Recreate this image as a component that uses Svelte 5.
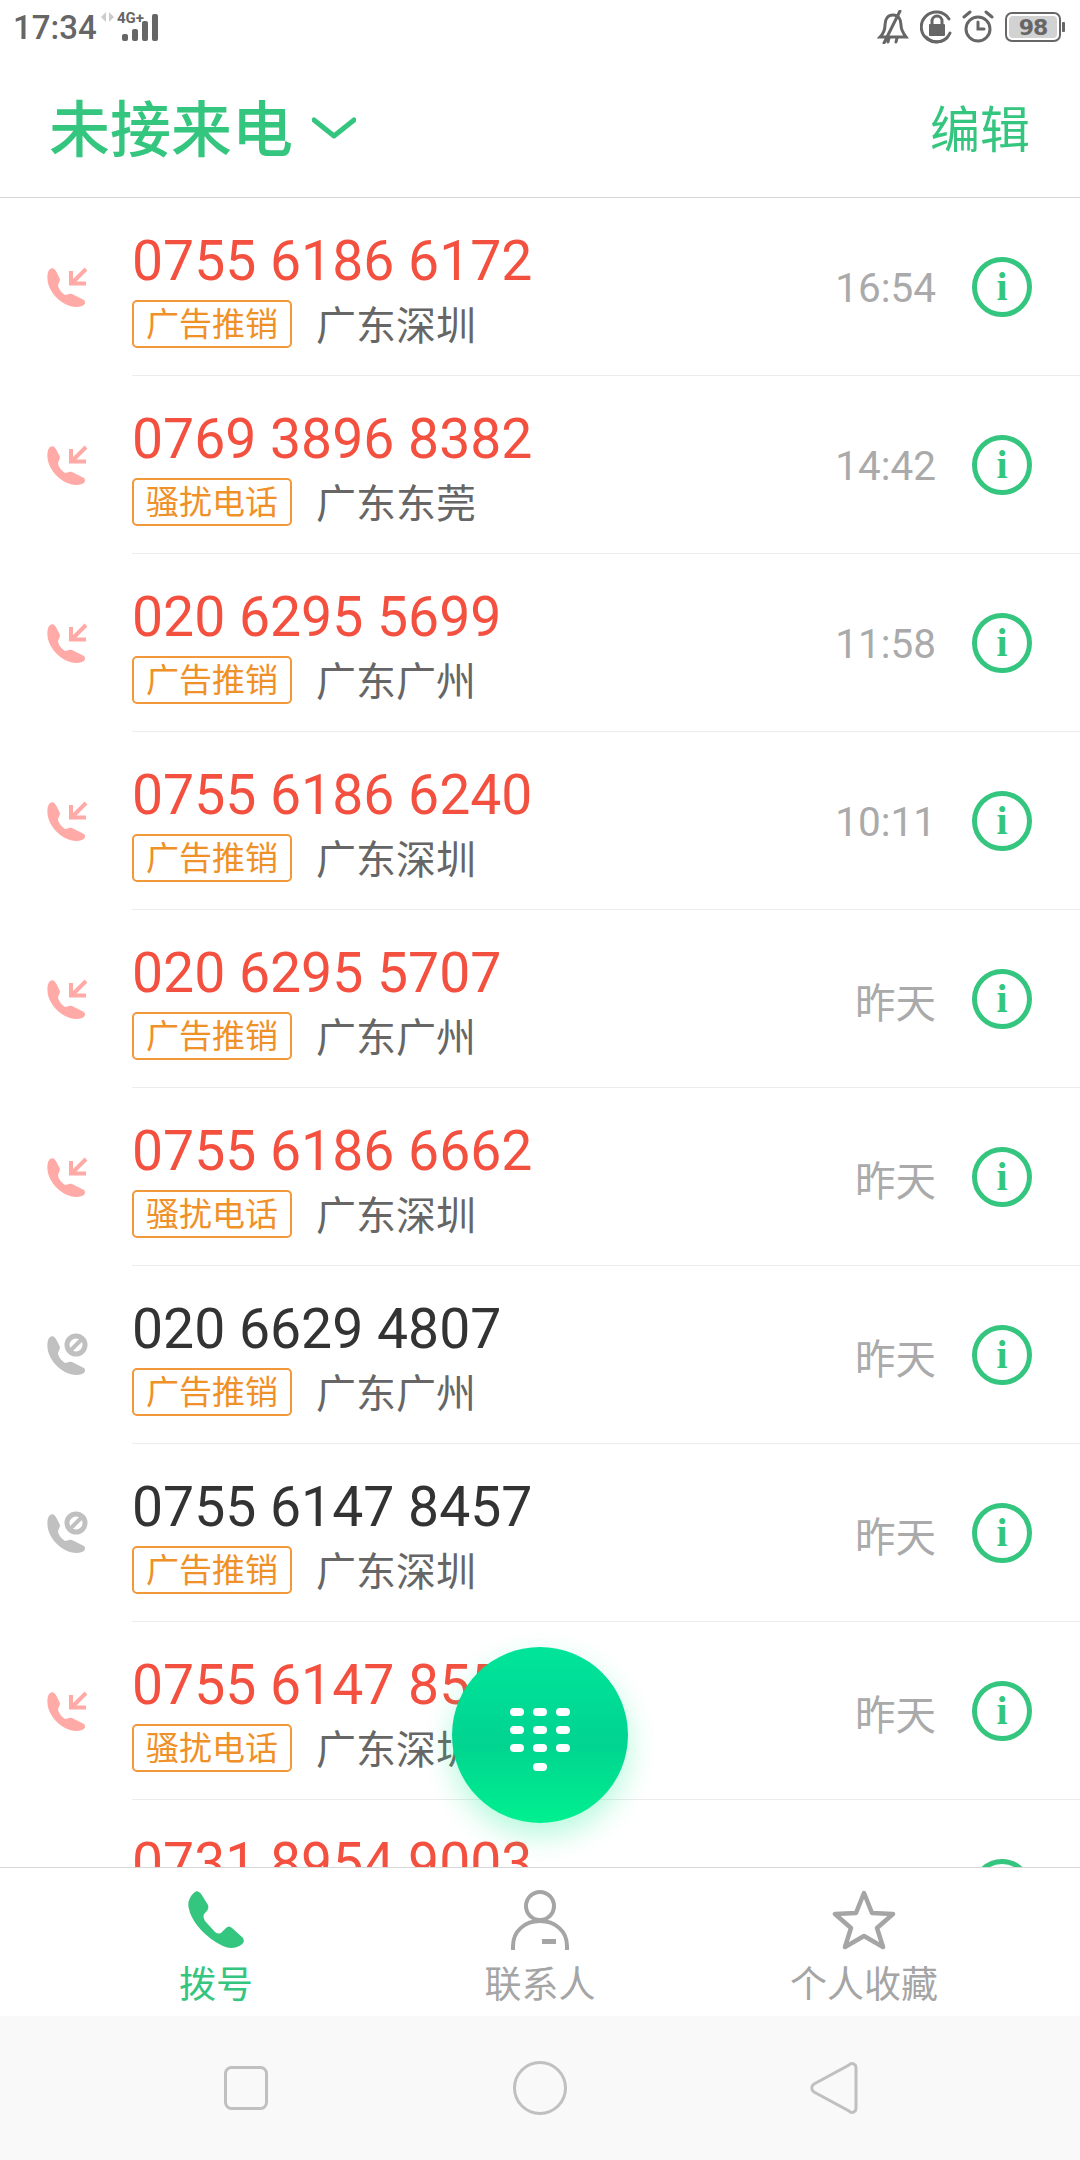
<script>
  const calls = [
    { num: '0755 6186 6172', tag: '广告推销', loc: '广东深圳', time: '16:54', missed: true },
    { num: '0769 3896 8382', tag: '骚扰电话', loc: '广东东莞', time: '14:42', missed: true },
    { num: '020 6295 5699', tag: '广告推销', loc: '广东广州', time: '11:58', missed: true },
    { num: '0755 6186 6240', tag: '广告推销', loc: '广东深圳', time: '10:11', missed: true },
    { num: '020 6295 5707', tag: '广告推销', loc: '广东广州', time: '昨天', missed: true },
    { num: '0755 6186 6662', tag: '骚扰电话', loc: '广东深圳', time: '昨天', missed: true },
    { num: '020 6629 4807', tag: '广告推销', loc: '广东广州', time: '昨天', missed: false },
    { num: '0755 6147 8457', tag: '广告推销', loc: '广东深圳', time: '昨天', missed: false },
    { num: '0755 6147 8552', tag: '骚扰电话', loc: '广东深圳', time: '昨天', missed: true },
    { num: '0731 8954 9003', tag: '广告推销', loc: '湖南长沙', time: '昨天', missed: true }
  ];
  const handset = 'M7 1C10-1 13 2 15 6L20 14C21 17 20 19 17 22C15 24 15 26 17 30L27 41C30 43 32 43 34 41L38 37C40 35 42 35 44 37L54 46C57 49 56 52 53 54C47 58 40 58 33 54C19 47 4 32 1 18C-1 11 2 5 7 1Z';
  const smallHandset = 'M3 1C6-1 8 1 10 5L13 11C13 14 11 15 11 18C12 22 15 25 18 27C20 27 22 25 25 26L37 32C39 34 38 37 35 38C30 40 24 39 18 36C9 31 3 23 1 15C0 9 0 4 3 1Z';
  const keys = [
    [1, 0], [24, 0], [47, 0],
    [1, 18], [24, 18], [47, 18],
    [1, 36], [24, 36], [47, 36],
    [24, 55]
  ];
</script>

<div class="screen">
  <div class="status">
    <span class="clock">17:34</span>
    <svg class="signal" width="60" height="40" viewBox="0 0 60 40">
      <path class="arrows" d="M6 5L1 10L6 15ZM9 5L14 10L9 15Z" />
      <rect class="bar" x="22" y="27" width="6" height="7" rx="2" />
      <rect class="bar" x="32" y="22" width="6" height="12" rx="2" />
      <rect class="bar" x="42" y="14" width="6" height="20" rx="2" />
      <rect class="bar" x="52" y="7" width="6" height="27" rx="2" />
    </svg>
    <span class="net">4G+</span>
    <span class="spacer"></span>
    <svg class="sicon" width="32" height="34" viewBox="0 0 32 34">
      <path class="s" d="M3 27C7 23 8 20 8 15C8 9 11 5 16 5C21 5 24 9 24 15C24 20 26 23 29 27Z" />
      <path class="s" d="M23 1L7 33M12 28L11 32M20 28L19 32" />
    </svg>
    <svg class="sicon" width="34" height="34" viewBox="0 0 34 34">
      <path class="s" d="M30 23A15 15 0 1 1 29 9" />
      <path class="s" d="M6 27A15 15 0 0 0 27 28" />
      <rect class="f" x="9" y="14" width="16" height="12" rx="1" />
      <path class="s" d="M12 15V11A5 5 0 0 1 22 11V15" />
    </svg>
    <svg class="sicon alarm" width="32" height="34" viewBox="0 0 32 34">
      <circle class="s" cx="16" cy="19" r="12" />
      <path class="s" d="M16 12V19H22M2 7L8 2M30 7L24 2" />
    </svg>
    <div class="battery"><span class="level">98</span></div>
    <span class="tip"></span>
  </div>

  <header class="head">
    <h1>未接来电</h1>
    <svg class="chev" width="44" height="22" viewBox="0 0 44 22">
      <path d="M2 3L22 19L42 3" />
    </svg>
    <span class="spacer"></span>
    <span class="edit">编辑</span>
  </header>

  <main class="main">
    <div class="list">
      {#each calls as c}
        <div class="row">
          <svg class="kind" class:gray={!c.missed} width="44" height="44" viewBox="0 0 44 44">
            <path class="hs" transform="translate(2 3)" d={smallHandset} />
            {#if c.missed}
              <path class="arr" d="M41 4L27 18M26 6V18.500H41" />
            {:else}
              <circle class="ring" cx="31" cy="12" r="9" />
              <path class="cut" d="M26 17L36 7" />
            {/if}
          </svg>
          <div class="body">
            <div class="info">
              <div class="num" class:red={c.missed}>{c.num}</div>
              <div class="sub">
                <span class="tag">{c.tag}</span>
                <span class="loc">{c.loc}</span>
              </div>
            </div>
            <span class="time">{c.time}</span>
            <span class="i">i</span>
          </div>
        </div>
      {/each}
    </div>
    <div class="fab">
      <svg width="62" height="66" viewBox="0 0 62 66">
        {#each keys as k}
          <rect x={k[0]} y={k[1]} width="14" height="8" rx="4" fill="#fff" />
        {/each}
      </svg>
    </div>
  </main>

  <nav class="tabs">
    <div class="tab on">
      <svg width="60" height="60" viewBox="0 0 60 60">
        <path class="solid" transform="translate(2 1)" d={handset} />
      </svg>
      <span>拨号</span>
    </div>
    <div class="tab">
      <svg width="60" height="60" viewBox="0 0 60 60">
        <ellipse class="line" cx="30" cy="16" rx="14" ry="14" />
        <path class="line" d="M3 60V56C3 41 15 31 30 31C45 31 57 41 57 56V60" />
        <rect class="mark" x="32" y="49" width="14" height="5" />
      </svg>
      <span>联系人</span>
    </div>
    <div class="tab">
      <svg width="64" height="60" viewBox="0 0 64 60">
        <path class="line round" d="M32 3L40 23L61 24L45 38L51 57L32 46L13 57L19 38L3 24L24 23Z" />
      </svg>
      <span>个人收藏</span>
    </div>
  </nav>

  <div class="sysnav">
    <svg width="44" height="44" viewBox="0 0 44 44"><rect class="n" x="1.500" y="1.500" width="41" height="41" rx="6" /></svg>
    <svg width="54" height="54" viewBox="0 0 54 54"><circle class="n" cx="27" cy="27" r="25.500" /></svg>
    <svg width="48" height="52" viewBox="0 0 48 52"><path class="n" d="M39 3C42 0 46 2 46 6V46C46 50 42 52 39 49L4 30C1 28 1 24 4 22Z" /></svg>
  </div>
</div>

<style>
  :global(body) {
    margin: 0;
    background: #fff;
  }
  .screen {
    width: 1080px;
    height: 2160px;
    display: flex;
    flex-direction: column;
    overflow: hidden;
    font-family: Roboto, "Noto Sans CJK SC", sans-serif;
  }
  .spacer {
    flex: 1;
  }
  .status {
    flex: none;
    height: 56px;
    display: flex;
    align-items: center;
    padding: 0 15px 0 13px;
    box-sizing: border-box;
    color: #666;
    position: relative;
  }
  .clock {
    font-size: 33px;
    font-weight: 500;
    line-height: 56px;
  }
  .signal {
    margin-left: 3px;
    margin-top: -3px;
  }
  .arrows {
    fill: #ccc;
  }
  .bar {
    fill: #666;
  }
  .net {
    position: absolute;
    left: 117px;
    top: 9px;
    font-size: 15px;
    font-weight: 700;
    line-height: 18px;
  }
  .sicon {
    margin-left: 11px;
    margin-top: -2px;
  }
  .sicon.alarm {
    margin-left: 8px;
  }
  .s {
    fill: none;
    stroke: #666;
    stroke-width: 3;
    stroke-linecap: round;
  }
  .f {
    fill: #666;
  }
  .battery {
    width: 56px;
    height: 30px;
    margin-left: 11px;
    margin-top: -3px;
    border: 2px solid #666;
    border-radius: 7px;
    box-sizing: border-box;
    padding: 2px;
  }
  .level {
    display: block;
    height: 22px;
    background: #d2d2d2;
    border-radius: 4px;
    font-size: 22px;
    font-weight: 700;
    line-height: 23px;
    text-align: center;
    font-family: "DejaVu Sans", sans-serif;
    color: #666;
    letter-spacing: -1px;
  }
  .tip {
    width: 3px;
    height: 10px;
    background: #666;
    margin-left: 1px;
    margin-top: -3px;
    border-radius: 1px;
  }
  .head {
    flex: none;
    height: 142px;
    box-sizing: border-box;
    border-bottom: 1px solid #d8d8d8;
    display: flex;
    align-items: center;
    padding: 8px 50px 0 49px;
    color: #34c57e;
  }
  h1 {
    margin: 0;
    font-size: 61px;
    font-weight: 500;
    line-height: 70px;
  }
  .chev {
    margin-left: 19px;
    margin-top: -5px;
  }
  .chev path {
    fill: none;
    stroke: #34c57e;
    stroke-width: 5;
    stroke-linecap: round;
    stroke-linejoin: round;
  }
  .edit {
    font-size: 50px;
    line-height: 60px;
  }
  .main {
    flex: 1;
    min-height: 0;
    position: relative;
  }
  .list {
    height: 100%;
    overflow: hidden;
  }
  .row {
    display: flex;
    height: 178px;
    align-items: center;
  }
  .kind {
    flex: none;
    width: 44px;
    height: 44px;
    margin: 0 43px 0 45px;
  }
  .hs {
    fill: #ffaaa6;
  }
  .arr {
    fill: none;
    stroke: #ffaaa6;
    stroke-width: 4;
  }
  .ring {
    fill: none;
    stroke: #c0c0c0;
    stroke-width: 5;
  }
  .cut {
    stroke: #c0c0c0;
    stroke-width: 4;
  }
  .gray .hs {
    fill: #c0c0c0;
  }
  .body {
    flex: 1;
    height: 178px;
    box-sizing: border-box;
    border-bottom: 1px solid #ececec;
    display: flex;
    align-items: center;
    padding-right: 48px;
  }
  .info {
    flex: 1;
    padding-top: 6px;
  }
  .num {
    font-size: 55.300px;
    line-height: 64px;
    margin-top: 4px;
    color: #333;
  }
  .num.red {
    color: #f45040;
  }
  .sub {
    display: flex;
    align-items: center;
    margin-top: 1px;
  }
  .tag {
    width: 160px;
    height: 48px;
    box-sizing: border-box;
    border: 2px solid #f2983a;
    border-radius: 5px;
    color: #f09028;
    font-size: 33px;
    line-height: 46px;
    text-align: center;
  }
  .loc {
    margin-left: 24px;
    font-size: 40px;
    line-height: 52px;
    padding-top: 6px;
    color: #666;
  }
  .time {
    font-size: 40.500px;
    color: #aaa;
    margin-right: 36px;
    padding-top: 3px;
  }
  .i {
    width: 60px;
    height: 60px;
    box-sizing: border-box;
    border: 5px solid #34c57e;
    border-radius: 50%;
    color: #34c57e;
    font-family: "Liberation Serif", serif;
    font-weight: 700;
    font-size: 40px;
    line-height: 50px;
    text-align: center;
  }
  .fab {
    position: absolute;
    left: 452px;
    top: 1449px;
    width: 176px;
    height: 176px;
    border-radius: 50%;
    background: linear-gradient(180deg, #00e59a 0%, #00d490 55%, #00f090 100%);
    box-shadow: 0 12px 30px rgba(0, 235, 140, 0.3);
    display: flex;
    align-items: center;
    justify-content: center;
  }
  .fab svg {
    margin-top: 12px;
  }
  .tabs {
    flex: none;
    height: 149px;
    box-sizing: border-box;
    border-top: 1px solid #d8d8d8;
    display: grid;
    grid-template-columns: repeat(3, 324px);
    padding: 0 54px;
    background: #fff;
    color: #a5a5a5;
    position: relative;
  }
  .tab {
    display: flex;
    flex-direction: column;
    align-items: center;
    padding-top: 22px;
    font-size: 37px;
    line-height: 46px;
  }
  .tab span {
    margin-top: 13px;
  }
  .tab.on {
    color: #34c57e;
  }
  .solid {
    fill: #34c57e;
  }
  .line {
    fill: none;
    stroke: #a5a5a5;
    stroke-width: 4;
  }
  .round {
    stroke-linejoin: round;
    stroke-width: 4.500;
  }
  .mark {
    fill: #a5a5a5;
  }
  .sysnav {
    flex: none;
    height: 144px;
    background: #f9f9f9;
    display: grid;
    grid-template-columns: repeat(3, 294px);
    padding: 0 99px 0 99px;
    justify-items: center;
    align-items: center;
    box-sizing: border-box;
  }
  .n {
    fill: none;
    stroke: #c0c0c0;
    stroke-width: 3;
  }
</style>
